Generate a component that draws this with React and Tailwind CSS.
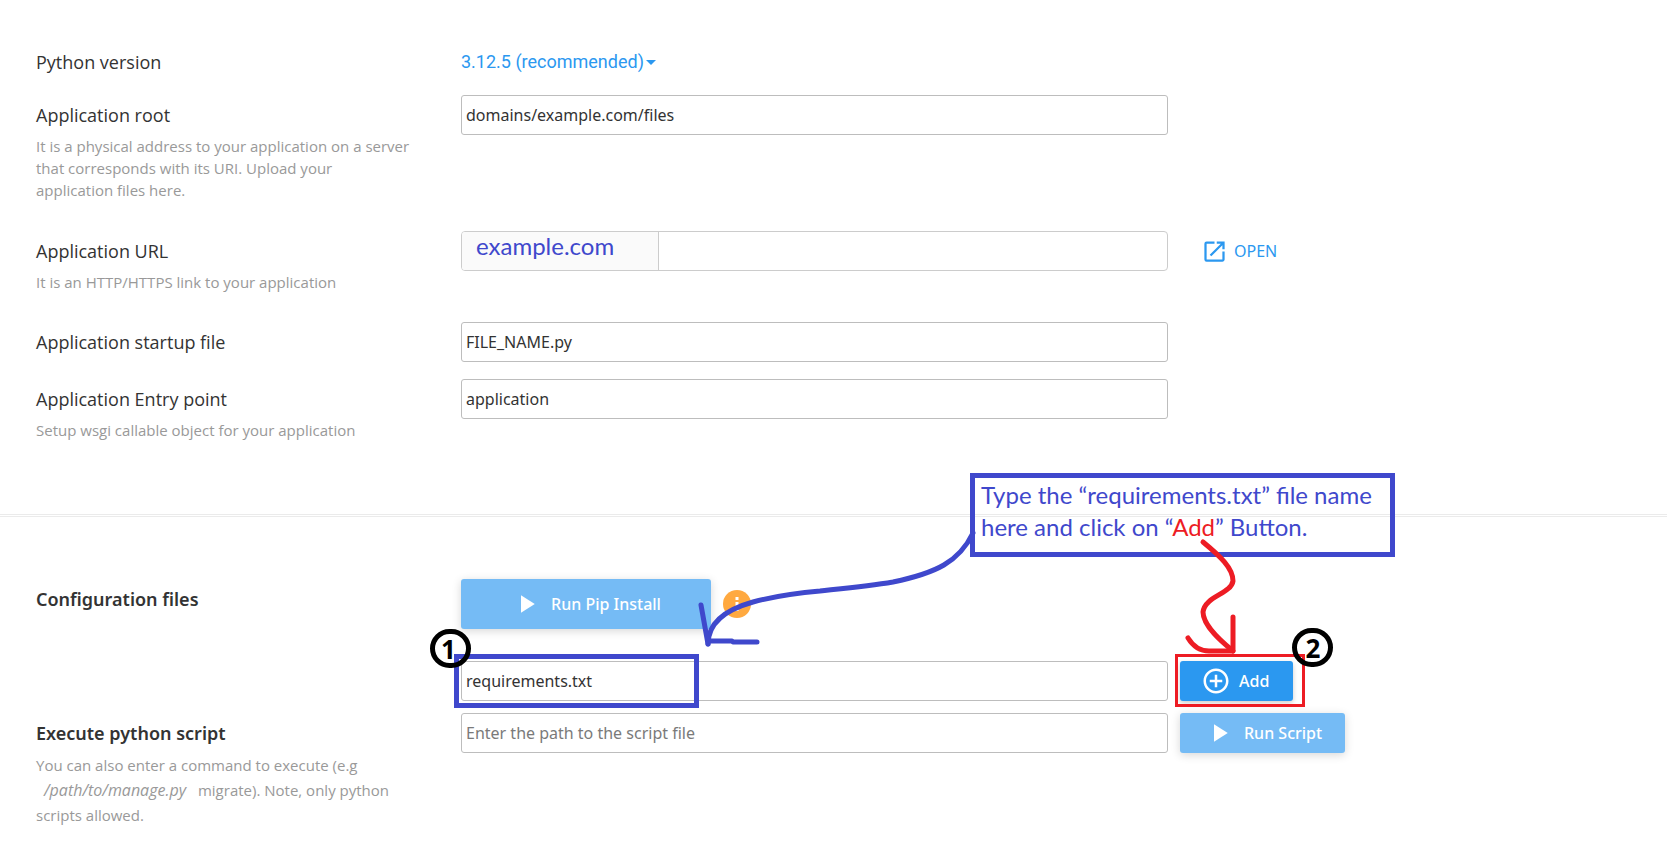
import { MdOpenInNew, MdAddCircleOutline, MdPlayArrow } from "react-icons/md";

const fieldClass =
  "block h-10 w-full rounded-[3px] border border-[#bdbdbd] bg-white px-1 font-['Noto_Sans',sans-serif] text-base text-[#333] outline-none placeholder:text-[#7a7a7a] focus:border-[#2b98f0]";
const rowClass = "grid grid-cols-[425fr_707fr_499fr] items-start";
const handClass = "font-[Lato,'Open_Sans',sans-serif] text-[#3f48cc]";

function Label({ id, title, bold, children, hintClass = "leading-[22px]" }) {
  return (
    <div className="pr-12">
      <label
        htmlFor={id}
        className={
          bold
            ? "block font-['Noto_Sans',sans-serif] text-lg leading-10 font-semibold text-[#333]"
            : "block text-lg leading-10 text-[#333]"
        }
      >
        {title}
      </label>
      {children && (
        <p id={`${id}-hint`} className={`text-[15px] text-[#999] ${hintClass}`}>
          {children}
        </p>
      )}
    </div>
  );
}

function Badge({ children, className }) {
  return (
    <span
      className={`pointer-events-none absolute flex h-[39px] w-[41px] items-center justify-center rounded-full border-5 border-black text-[26px] leading-none font-bold text-black ${className}`}
    >
      {children}
    </span>
  );
}

function Arrows() {
  return (
    <svg
      className="pointer-events-none absolute top-0 left-0 h-[335px] w-[1667px]"
      viewBox="0 517 1667 335"
      fill="none"
      strokeWidth="5"
      strokeLinecap="round"
      strokeLinejoin="round"
      aria-hidden="true"
    >
      <g stroke="#3f48cc">
        <path d="M973 533C959 562 936 573 893 582C869 586 848 588 820 591C795 593 772 597 753 602C728 609 708 622 708 644" />
        <path d="M701 605L708 644M708 641L732 641L733 642L757 642" />
      </g>
      <g stroke="#ed1c24">
        <path d="M1203 542C1220 556 1233 568 1233 581C1231 594 1205 596 1203 612C1203 626 1222 642 1233 651" />
        <path d="M1233 617V651M1188 638Q1196 651 1209 651H1233" />
      </g>
    </svg>
  );
}

export default function App() {
  return (
    <main className="bg-white pb-5 font-['Open_Sans','Noto_Sans',sans-serif]">
      <section className="pt-[42px] pb-[73px] pl-9">
        <div className={rowClass}>
          <Label id="version" title="Python version" />
          <div className="flex h-10 items-center">
            <div className="relative flex items-center text-[#2b98f0]">
              <select
                id="version"
                className="cursor-pointer appearance-none bg-transparent pr-3 font-[Roboto,sans-serif] text-lg outline-none"
              >
                <option>3.12.5 (recommended)</option>
              </select>
              <svg viewBox="0 0 10 5" className="pointer-events-none absolute right-0 h-[5px] w-[10px]" aria-hidden="true">
                <path d="M0 0H10L5 5Z" fill="currentColor" />
              </svg>
            </div>
          </div>
        </div>

        <div className={`${rowClass} mt-[13px]`}>
          <Label id="root-path" title="Application root">
            It is a physical address to your application on a server that corresponds with its URI. Upload your
            application files here.
          </Label>
          <input id="root-path" className={fieldClass} defaultValue="domains/example.com/files" />
        </div>

        <div className={`${rowClass} mt-[30px]`}>
          <Label id="url" title="Application URL">
            It is an HTTP/HTTPS link to your application
          </Label>
          <div className="flex h-10 overflow-hidden rounded-[4px] border border-[#ccc]">
            <span className={`w-[197px] shrink-0 border-r border-[#ccc] bg-[#fafafa] pl-3.5 text-2xl leading-7 ${handClass}`}>
              example.com
            </span>
            <input id="url" className="min-w-0 flex-1 px-1 text-base text-[#333] outline-none" />
          </div>
          <a
            href="#open"
            className="flex h-10 items-center gap-1.5 pl-[33px] font-['Noto_Sans',sans-serif] text-base text-[#2b98f0]"
          >
            <MdOpenInNew className="size-[27px]" />
            OPEN
          </a>
        </div>

        <div className={`${rowClass} mt-[29px]`}>
          <Label id="startup" title="Application startup file" />
          <input id="startup" className={fieldClass} defaultValue="FILE_NAME.py" />
        </div>

        <div className={`${rowClass} mt-[17px]`}>
          <Label id="entry" title="Application Entry point">
            Setup wsgi callable object for your application
          </Label>
          <input id="entry" className={fieldClass} defaultValue="application" />
        </div>
      </section>

      <hr className="h-[3px] border-y border-[#ebebeb]" />

      <section className="relative pt-[62px] pl-9">
        <div className={rowClass}>
          <Label id="config" title="Configuration files" bold />
          <div className="flex items-center gap-3">
            <button
              type="button"
              className="flex h-[50px] w-[250px] items-center justify-center gap-2.5 rounded-[3px] bg-[#75bbf5] font-['Noto_Sans',sans-serif] text-base font-medium text-white shadow-[0_2px_10px_rgba(0,0,0,0.16)]"
            >
              <MdPlayArrow className="size-[30px]" />
              Run Pip Install
            </button>
            <svg viewBox="0 0 28 28" className="size-7" role="img" aria-label="Information">
              <circle cx="14" cy="14" r="14" fill="#ffa940" />
              <path d="M14 7V10M14 12V21" stroke="white" strokeWidth="3" />
            </svg>
          </div>
        </div>

        <div className={`${rowClass} mt-8`}>
          <div />
          <div className="relative">
            <input id="config" className={fieldClass} defaultValue="requirements.txt" />
            <div className="pointer-events-none absolute -top-[7px] -left-[7px] h-[54px] w-[245px] border-5 border-[#3f48cc]" />
            <Badge className="-top-8 -left-[31px] pr-1">1</Badge>
          </div>
          <div className="pl-3">
            <div className="relative inline-block align-top">
              <button
                type="button"
                className="flex h-10 items-center gap-2 rounded-[3px] bg-[#2b98f0] pr-6 pl-[21px] font-['Noto_Sans',sans-serif] text-base font-medium text-white shadow-[0_2px_5px_rgba(0,0,0,0.2)]"
              >
                <MdAddCircleOutline className="size-[30px]" />
                Add
              </button>
              <div className="pointer-events-none absolute -top-[7px] -right-3 -left-[5px] h-[53px] border-3 border-[#ed1c24]" />
              <Badge className="-top-[33px] -right-10">2</Badge>
            </div>
          </div>
        </div>

        <div className={`${rowClass} mt-3`}>
          <Label id="script" title="Execute python script" bold hintClass="leading-[25px]">
            You can also enter a command to execute (e.g{" "}
            <em className="mx-2 text-base leading-none">/path/to/manage.py</em> migrate). Note, only python scripts
            allowed.
          </Label>
          <input id="script" className={fieldClass} placeholder="Enter the path to the script file" />
          <div className="pl-3">
            <button
              type="button"
              className="flex h-10 items-center gap-2.5 rounded-[3px] bg-[#75bbf5] pr-[23px] pl-6 font-['Noto_Sans',sans-serif] text-base font-medium text-white shadow-[0_2px_10px_rgba(0,0,0,0.16)]"
            >
              <MdPlayArrow className="size-[30px]" />
              Run Script
            </button>
          </div>
        </div>

        <p
          className={`absolute -top-11 left-[970px] h-[84px] w-[425px] border-5 border-[#3f48cc] px-1.5 pt-px text-2xl leading-8 whitespace-nowrap ${handClass}`}
        >
          Type the “requirements.txt” file name
          <br />
          here and click on “<span className="text-[#ed1c24]">Add</span>” Button.
        </p>
        <Arrows />
      </section>
    </main>
  );
}
